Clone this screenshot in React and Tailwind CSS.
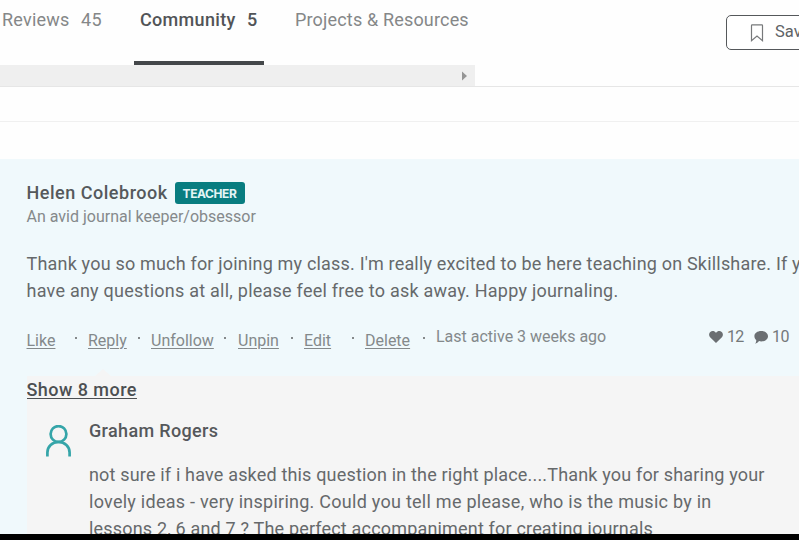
const actions = [
  { label: 'Like', cell: 'w-[61.5px]', dot: 'left-[48px]' },
  { label: 'Reply', cell: 'w-[63px]', dot: 'left-[50px]' },
  { label: 'Unfollow', cell: 'w-[87px]', dot: 'left-[73px]' },
  { label: 'Unpin', cell: 'w-[66px]', dot: 'left-[53px]' },
  { label: 'Edit', cell: 'w-[61px]', dot: 'left-[48px]' },
  { label: 'Delete', cell: 'w-[71px]', dot: 'left-[58px]' },
];

function Tabs() {
  return (
    <div className="w-[475px] shrink-0">
      <nav className="flex h-[65px] text-[18px] leading-[40px] text-[#858788]">
        <div className="w-[81px] pl-[2px] tracking-[0.22px]">Reviews</div>
        <div className="w-[53px] tracking-[0.3px]">45</div>
        <div className="flex w-[130px] border-b-4 border-[#44474a] pl-[6px] font-medium text-[#515457]">
          <span className="w-[107px] tracking-[0.32px]">Community</span>
          <span>5</span>
        </div>
        <div className="pl-[31px] tracking-[0.17px]">Projects &amp; Resources</div>
      </nav>
      <div className="flex h-[21px] items-center justify-end bg-[#efefef] pr-[8px]">
        <svg width="5" height="10" viewBox="0 0 5 10" fill="#959595">
          <path d="M0 0.5 5 5 0 9.5z" />
        </svg>
      </div>
    </div>
  );
}

function SaveButton() {
  return (
    <button className="mt-[15px] mr-[-50px] ml-auto flex h-[35px] w-[123px] shrink-0 items-center rounded-[5px] border-[1.5px] border-[#55585b] bg-white pl-[23px] text-[16.5px] text-[#606366]">
      <svg width="14" height="18" viewBox="0 0 14 18" fill="none" stroke="#77797b" strokeWidth="1.2">
        <path d="M1.5 1.5q0-.6.6-.6h9.8q.6 0 .6.6v15.2L7 12 1.5 16.7z" />
      </svg>
      <span className="ml-[11px]">Save</span>
    </button>
  );
}

function CommentActions() {
  return (
    <div className="flex h-[24px] pl-[26.5px] text-[16px] leading-[24px] text-[#84898b]">
      {actions.map((action) => (
        <div key={action.label} className={`relative shrink-0 pt-[4px] ${action.cell}`}>
          <a className="underline decoration-1 underline-offset-2">{action.label}</a>
          <span className={`absolute top-[12px] size-[2px] bg-[#85898b] ${action.dot}`} />
        </div>
      ))}
      <span className="whitespace-nowrap">Last active 3 weeks ago</span>
      <div className="ml-auto flex items-center pr-[10px] text-[#74787a]">
        <svg width="14" height="12" viewBox="0 0 14 12" fill="#6b6f72">
          <path d="M7 12 1.1 6.3C-.4 4.700-.1 2.100 1.300.9 3.100-.5 5.700 0 7 2 8.300 0 10.900-.5 12.700.9c1.400 1.200 1.700 3.800.2 5.400z" />
        </svg>
        <span className="ml-[4px] w-[27px] tracking-[-0.7px]">12</span>
        <svg width="14" height="13" viewBox="0 0 14 13" fill="#6b6f72">
          <path d="M7.200 0C11 0 14 2.200 14 5.200s-3 5.200-6.800 5.200c-.8 0-1.500-.1-2.200-.3C4 11.500 2.600 12.500 1.200 12.700c.8-1.100 1.200-2.400 1-3.700C1 8.100.4 6.700.4 5.200.4 2.200 3.400 0 7.200 0z" />
        </svg>
        <span className="ml-[4px] tracking-[-0.5px]">10</span>
      </div>
    </div>
  );
}

function Reply() {
  return (
    <div className="relative ml-[26.5px] h-[158px] overflow-hidden bg-[#f5f5f5]">
      <a className="block h-[27px] text-[18px] leading-[27px] font-medium tracking-[0.46px] text-[#4c4f52] underline decoration-1 underline-offset-2">
        Show 8 more
      </a>
      <div className="flex pt-[14px] pl-[19px]">
        <svg className="mt-[8px] shrink-0" width="25" height="32" viewBox="0 0 25 32" fill="none" stroke="#35a5a9" strokeWidth="2.700">
          <circle cx="12.500" cy="9" r="7.900" />
          <path d="M1.400 31.500v-4C1.400 21.200 6.300 17 12.500 17s11.100 4.200 11.100 10.500v4" />
        </svg>
        <div className="ml-[18.5px] text-[18px] leading-[27.3px] text-[#66696b]">
          <p className="font-medium leading-[27px] tracking-[0.35px] text-[#55585b]">Graham Rogers</p>
          <div className="pt-[16.5px] whitespace-nowrap">
            <p className="tracking-[0.175px]">
              not sure if i have asked this question in the right place....Thank you for sharing your
            </p>
            <p className="tracking-[0.26px]">
              lovely ideas - very inspiring. Could you tell me please, who is the music by in
            </p>
            <p className="tracking-[0.18px]">lessons 2, 6 and 7 ? The perfect accompaniment for creating journals</p>
          </div>
        </div>
      </div>
    </div>
  );
}

export default function App() {
  return (
    <div className="flex h-[540px] w-[799px] flex-col overflow-hidden bg-[#fefefe] font-[Roboto,sans-serif]">
      <header className="flex h-[87px] shrink-0 border-b border-[#e6e6e6]">
        <Tabs />
        <SaveButton />
      </header>
      <div className="h-[35px] shrink-0 border-b border-[#f0f0f0]" />
      <main className="mt-[37px] h-[375px] shrink-0 bg-[#f0f9fc]">
        <div className="flex h-[46px] items-end pl-[26.5px]">
          <h2 className="w-[148.5px] text-[18px] leading-[24px] font-medium tracking-[0.52px] text-[#55595c]">
            Helen Colebrook
          </h2>
          <span className="mb-[1px] h-[22px] w-[70px] rounded-[3px] bg-[#087d80] pr-[1px] text-center font-[Inter,sans-serif] text-[12px] leading-[24px] font-bold tracking-[-0.4px] text-[#e4f5f5]">
            TEACHER
          </span>
        </div>
        <p className="h-[45px] pl-[26.5px] text-[16px] leading-[23px] text-[#85898b]">An avid journal keeper/obsessor</p>
        <div className="h-[75px] pl-[26.5px] text-[18px] leading-[27.3px] whitespace-nowrap text-[#66696b]">
          <p className="tracking-[0.19px]">
            Thank you so much for joining my class. I'm really excited to be here teaching on Skillshare. If you
          </p>
          <p className="tracking-[0.24px]">have any questions at all, please feel free to ask away. Happy journaling.</p>
        </div>
        <CommentActions />
        <svg className="mt-[20px] ml-[95px]" width="16" height="7" viewBox="0 0 16 7" fill="#f5f5f5">
          <path d="M8 0l8 7H0z" />
        </svg>
        <Reply />
      </main>
      <div className="h-[6px] shrink-0 bg-black" />
    </div>
  );
}
